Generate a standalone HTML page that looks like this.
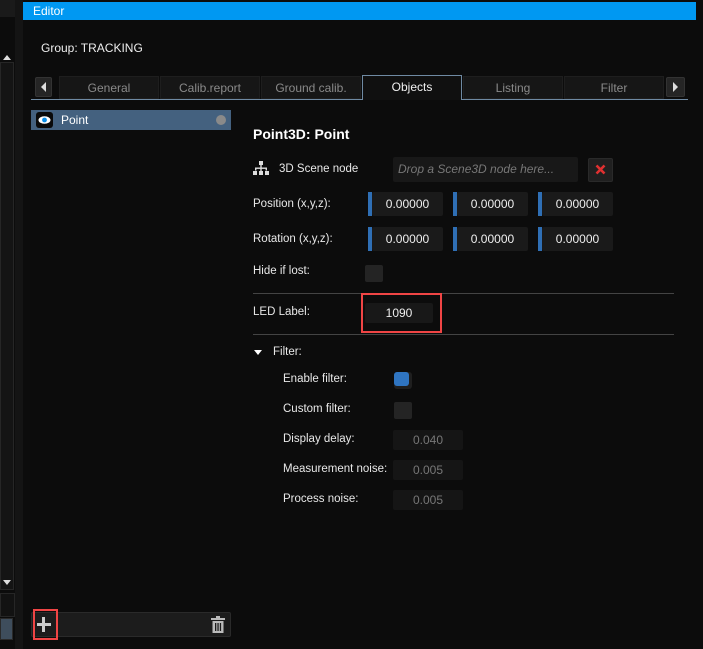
<!DOCTYPE html>
<html><head><style>
*{margin:0;padding:0;box-sizing:border-box}
body{width:703px;height:649px;background:#0c0c0c;font-family:"Liberation Sans",sans-serif;font-size:12px;color:#e6e6e6;position:relative;overflow:hidden}
.a{position:absolute}
.tab{position:absolute;top:76px;height:23px;background:#161616;border:1px solid #1e1e1e;color:#8a8a8a;text-align:center;line-height:22px;font-size:12px}
.inp{position:absolute;background:#1a1a1a;border-radius:2px;text-align:center;line-height:24px;color:#eee}
.bl{position:absolute;width:4px;background:#2f6fb5}
.lbl{position:absolute;font-size:11.5px;color:#e8e8e8}
.dis{position:absolute;background:#151515;border-radius:2px;color:#777;text-align:center;line-height:20px;width:70px;height:20px;left:393px}
</style></head><body>
<div class="a" style="left:0;top:0;width:15px;height:17px;background:#1a1a1a"></div>
<div class="a" style="left:0;top:62px;width:14px;height:528px;background:#141414;border:1px solid #262626"></div>
<div class="a" style="left:3px;top:55px;width:0;height:0;border-left:4px solid transparent;border-right:4px solid transparent;border-bottom:5px solid #ddd"></div>
<div class="a" style="left:3px;top:580px;width:0;height:0;border-left:4px solid transparent;border-right:4px solid transparent;border-top:5px solid #ddd"></div>
<div class="a" style="left:0;top:593px;width:15px;height:24px;background:#121212;border:1px solid #262626"></div>
<div class="a" style="left:0;top:618px;width:13px;height:22px;background:#3e4d5c;border:1px solid #2a2a2a"></div>
<div class="a" style="left:15px;top:0;width:8px;height:649px;background:#141414"></div>
<div class="a" style="left:23px;top:2px;width:673px;height:18px;background:#0098f2;color:#fff;padding-left:10px;line-height:18px;font-size:12px">Editor</div>
<div class="a" style="left:41px;top:41px;font-size:12px;color:#eee">Group: TRACKING</div>
<div class="a" style="left:35px;top:77px;width:17px;height:20px;background:#252525;border:1px solid #333;border-radius:2px"></div>
<div class="a" style="left:41px;top:82px;border-top:5px solid transparent;border-bottom:5px solid transparent;border-right:5px solid #ddd"></div>
<div class="tab" style="left:59px;width:100px">General</div>
<div class="tab" style="left:160px;width:100px">Calib.report</div>
<div class="tab" style="left:261px;width:100px">Ground calib.</div>
<div class="tab" style="left:362px;width:100px;top:75px;height:25px;background:#101010;border:1px solid #6f8aa3;border-bottom:none;color:#f0f0f0">Objects</div>
<div class="tab" style="left:463px;width:100px">Listing</div>
<div class="tab" style="left:564px;width:100px">Filter</div>
<div class="a" style="left:666px;top:77px;width:19px;height:20px;background:#252525;border:1px solid #333;border-radius:2px"></div>
<div class="a" style="left:673px;top:82px;border-top:5px solid transparent;border-bottom:5px solid transparent;border-left:5px solid #ddd"></div>
<div class="a" style="left:31px;top:99px;width:331px;height:1px;background:#6f8aa3"></div>
<div class="a" style="left:462px;top:99px;width:226px;height:1px;background:#6f8aa3"></div>
<div class="a" style="left:31px;top:110px;width:200px;height:20px;background:#44617f"></div>
<div class="a" style="left:36px;top:112px;width:17px;height:16px;background:#0a0a0a;border-radius:3px"></div>
<svg class="a" style="left:38px;top:115px" width="13" height="10" viewBox="0 0 13 10"><ellipse cx="6.5" cy="5" rx="6" ry="3.8" fill="#fff"/><circle cx="6.5" cy="5" r="2.4" fill="#0a8ee8"/></svg>
<div class="a" style="left:61px;top:113px;color:#fff;font-size:12px">Point</div>
<div class="a" style="left:216px;top:115px;width:10px;height:10px;border-radius:50%;background:#8a8a8a"></div>
<div class="a" style="left:31px;top:612px;width:200px;height:25px;background:#1c1c1c;border:1px solid #2a2a2a;border-radius:2px"></div>
<div class="a" style="left:33px;top:609px;width:25px;height:31px;border:2px solid #f04545"></div>
<div class="a" style="left:37px;top:623px;width:14px;height:3px;background:#ccc"></div>
<div class="a" style="left:42px;top:617px;width:3px;height:15px;background:#ccc"></div>
<svg class="a" style="left:210px;top:616px" width="16" height="18" viewBox="0 0 16 18"><rect x="1" y="2" width="14" height="2" fill="#bbb"/><rect x="6" y="0" width="4" height="2" fill="#bbb"/><rect x="2.5" y="5" width="11" height="12" fill="#bbb"/><rect x="5" y="7" width="1.3" height="8" fill="#1c1c1c"/><rect x="7.4" y="7" width="1.3" height="8" fill="#1c1c1c"/><rect x="9.8" y="7" width="1.3" height="8" fill="#1c1c1c"/></svg>
<div class="a" style="left:253px;top:126px;font-size:14px;font-weight:bold;color:#fff">Point3D: Point</div>
<svg class="a" style="left:253px;top:161px" width="16" height="15" viewBox="0 0 16 15"><rect x="6" y="0" width="4" height="4" fill="#ddd"/><rect x="7.3" y="4" width="1.4" height="3" fill="#ddd"/><rect x="2" y="6.5" width="12" height="1.4" fill="#ddd"/><rect x="2" y="6.5" width="1.4" height="3" fill="#ddd"/><rect x="12.6" y="6.5" width="1.4" height="3" fill="#ddd"/><rect x="0" y="10" width="4" height="4" fill="#ddd"/><rect x="6" y="10" width="4" height="4" fill="#ddd"/><rect x="12" y="10" width="4" height="4" fill="#ddd"/><rect x="7.3" y="7" width="1.4" height="3" fill="#ddd"/></svg>
<div class="lbl" style="left:279px;top:163px">3D Scene node</div>
<div class="a" style="left:393px;top:157px;width:185px;height:25px;background:#181818;border-radius:2px;color:#777;font-style:italic;line-height:25px;padding-left:5px">Drop a Scene3D node here...</div>
<div class="a" style="left:588px;top:158px;width:25px;height:24px;background:#202020;border:1px solid #2a2a2a;border-radius:2px"></div>
<svg class="a" style="left:595px;top:164px" width="11" height="11" viewBox="0 0 11 11"><path d="M1.5 1.5L9.5 9.5M9.5 1.5L1.5 9.5" stroke="#e03030" stroke-width="2.6"/></svg>
<div class="lbl" style="left:253px;top:198px">Position (x,y,z):</div>
<div class="lbl" style="left:253px;top:233px">Rotation (x,y,z):</div>
<div class="bl" style="left:368px;top:192px;height:24px"></div><div class="inp" style="left:372px;top:192px;width:71px;height:24px">0.00000</div>
<div class="bl" style="left:453px;top:192px;height:24px"></div><div class="inp" style="left:457px;top:192px;width:71px;height:24px">0.00000</div>
<div class="bl" style="left:538px;top:192px;height:24px"></div><div class="inp" style="left:542px;top:192px;width:71px;height:24px">0.00000</div>
<div class="bl" style="left:368px;top:227px;height:24px"></div><div class="inp" style="left:372px;top:227px;width:71px;height:24px">0.00000</div>
<div class="bl" style="left:453px;top:227px;height:24px"></div><div class="inp" style="left:457px;top:227px;width:71px;height:24px">0.00000</div>
<div class="bl" style="left:538px;top:227px;height:24px"></div><div class="inp" style="left:542px;top:227px;width:71px;height:24px">0.00000</div>
<div class="lbl" style="left:253px;top:265px">Hide if lost:</div>
<div class="a" style="left:365px;top:265px;width:18px;height:17px;background:#242424;border-radius:2px"></div>
<div class="a" style="left:253px;top:293px;width:421px;height:1px;background:#444"></div>
<div class="lbl" style="left:253px;top:306px">LED Label:</div>
<div class="inp" style="left:365px;top:303px;width:68px;height:20px;line-height:20px;background:#181818">1090</div>
<div class="a" style="left:361px;top:293px;width:81px;height:40px;border:2px solid #f04545"></div>
<div class="a" style="left:253px;top:334px;width:421px;height:1px;background:#444"></div>
<div class="a" style="left:254px;top:350px;border-left:4px solid transparent;border-right:4px solid transparent;border-top:5px solid #fff"></div>
<div class="lbl" style="left:273px;top:346px">Filter:</div>
<div class="lbl" style="left:283px;top:373px">Enable filter:</div>
<div class="a" style="left:394px;top:372px;width:18px;height:17px;background:#1f1f1f;border-radius:3px"></div>
<div class="a" style="left:394px;top:372px;width:15px;height:14px;background:#2f75c2;border-radius:3px"></div>
<div class="lbl" style="left:283px;top:403px">Custom filter:</div>
<div class="a" style="left:394px;top:402px;width:18px;height:17px;background:#242424;border-radius:2px"></div>
<div class="lbl" style="left:283px;top:433px">Display delay:</div>
<div class="dis" style="top:430px">0.040</div>
<div class="lbl" style="left:283px;top:463px">Measurement noise:</div>
<div class="dis" style="top:460px">0.005</div>
<div class="lbl" style="left:283px;top:493px">Process noise:</div>
<div class="dis" style="top:490px">0.005</div>
<div class="a" style="left:696px;top:0;width:7px;height:649px;background:#0c0c0c"></div>
</body></html>
